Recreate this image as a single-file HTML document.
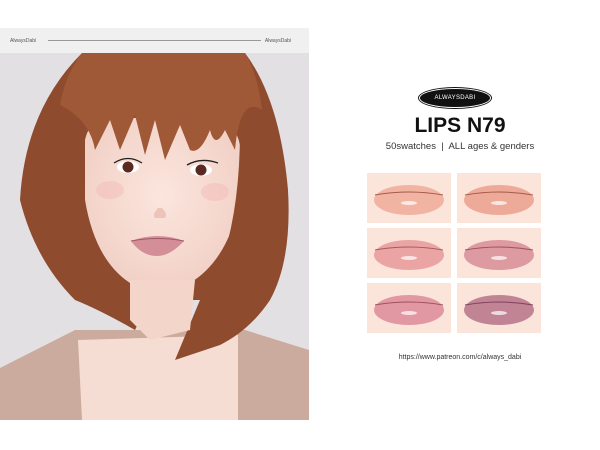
<!DOCTYPE html>
<html><head><style>
body{margin:0;width:600px;height:450px;background:#fff;position:relative;overflow:hidden;font-family:"Liberation Sans",sans-serif}
.hdr{position:absolute;left:0;top:28px;width:309px;height:25px;background:#f0f0f0;font-size:5px;color:#555}
.hdr span{position:absolute;top:10px}
.line{position:absolute;left:48px;right:48px;top:12px;height:1px;background:#999}
.pill{position:absolute;left:419px;top:88px;width:70px;height:18px;border-radius:50%;background:#111;border:1px solid #fff;box-shadow:0 0 0 1px #111;color:#fff;font-size:6px;text-align:center;line-height:18px;letter-spacing:.3px}
.title{position:absolute;left:360px;width:200px;text-align:center;top:114px;font-size:21px;font-weight:bold;color:#111}
.sub{position:absolute;left:340px;width:240px;text-align:center;top:141px;font-size:9.5px;color:#333}
.sw{position:absolute;width:84px;height:50px;background:#fbe4da;overflow:hidden}
.url{position:absolute;left:340px;width:240px;text-align:center;top:354px;font-size:7px;color:#333}
</style></head><body>
<div class="hdr"><span style="left:10px">AlwaysDabi</span><div class="line"></div><span style="right:18px">AlwaysDabi</span></div>
<svg style="position:absolute;left:0;top:53px" width="309" height="367" viewBox="0 53 309 367">
<defs><radialGradient id="sk" cx=".5" cy=".45" r=".6"><stop offset="0" stop-color="#fbe6de"/><stop offset="1" stop-color="#f1cfc4"/></radialGradient></defs>
<rect x="0" y="53" width="309" height="367" fill="#e3e0e3"/>
<path d="M0 368 L75 330 L245 330 L309 350 L309 420 L0 420Z" fill="#cbab9d"/>
<path d="M78 340 L82 420 L238 420 L238 335 Z" fill="#f6ddd3"/>
<path d="M82 53 L245 53 Q280 100 288 190 Q292 260 270 300 Q250 330 220 345 L175 360 L200 300 L150 300 L135 330 Q100 310 75 300 Q35 260 20 200 Q25 110 82 53Z" fill="#8e4b2e"/>
<path d="M85 140 Q90 115 120 118 L210 118 Q235 120 240 145 L240 200 Q228 260 190 283 Q160 295 130 283 Q95 260 85 200Z" fill="url(#sk)"/>
<path d="M130 280 L195 280 L190 330 L150 340 L130 320Z" fill="#f3d5ca"/>
<path d="M82 53 L245 53 Q258 75 262 110 Q240 95 235 150 L225 130 Q215 150 210 130 Q200 155 190 150 L180 125 L165 160 L155 120 L145 155 L135 115 L120 150 L110 120 L95 150 Q90 120 60 105 Q65 75 82 53Z" fill="#a05937"/>
<path d="M60 105 Q85 140 85 200 Q90 250 120 290 L95 300 Q55 250 50 180Z" fill="#8e4b2e"/>
<path d="M240 130 Q240 230 210 290 L245 300 Q270 240 262 150Z" fill="#8e4b2e"/>
<ellipse cx="128" cy="167" rx="11" ry="6" fill="#fff"/><circle cx="128" cy="167" r="5.5" fill="#5a2a22"/>
<path d="M114 163 Q128 154 142 163" stroke="#222" stroke-width="1.3" fill="none"/>
<ellipse cx="201" cy="170" rx="11" ry="6" fill="#fff"/><circle cx="201" cy="170" r="5.5" fill="#5a2a22"/>
<path d="M187 165 Q201 157 218 163" stroke="#222" stroke-width="1.3" fill="none"/>
<ellipse cx="110" cy="190" rx="14" ry="9" fill="#f4bfbd" opacity=".6"/>
<ellipse cx="215" cy="192" rx="14" ry="9" fill="#f4bfbd" opacity=".6"/>
<path d="M158 208 Q152 215 155 218 L165 218 Q168 214 162 208" fill="#ecc4b8"/>
<path d="M131 241 Q158 231 184 241 Q170 256 157 256 Q142 256 131 241Z" fill="#d48e98"/>
<path d="M131 241 Q158 236 184 241" stroke="#a05a66" fill="none"/>
</svg>
<div class="pill">ALWAYSDABI</div>
<div class="title">LIPS N79</div>
<div class="sub">50swatches &nbsp;|&nbsp; ALL ages &amp; genders</div>
<div class="sw" style="left:367px;top:173px"><svg width="84" height="50"><ellipse cx="42" cy="27" rx="35" ry="15" fill="#f2b4a2"/><path d="M8 22 Q42 16 76 22" stroke="#a65a4a" fill="none"/><ellipse cx="42" cy="30" rx="8" ry="2" fill="#fff" opacity=".7"/></svg></div>
<div class="sw" style="left:457px;top:173px"><svg width="84" height="50"><ellipse cx="42" cy="27" rx="35" ry="15" fill="#eeaa98"/><path d="M8 22 Q42 16 76 22" stroke="#a65a4a" fill="none"/><ellipse cx="42" cy="30" rx="8" ry="2" fill="#fff" opacity=".7"/></svg></div>
<div class="sw" style="left:367px;top:228px"><svg width="84" height="50"><ellipse cx="42" cy="27" rx="35" ry="15" fill="#eba4a4"/><path d="M8 22 Q42 16 76 22" stroke="#a65a5a" fill="none"/><ellipse cx="42" cy="30" rx="8" ry="2" fill="#fff" opacity=".7"/></svg></div>
<div class="sw" style="left:457px;top:228px"><svg width="84" height="50"><ellipse cx="42" cy="27" rx="35" ry="15" fill="#dd9aa0"/><path d="M8 22 Q42 16 76 22" stroke="#a05060" fill="none"/><ellipse cx="42" cy="30" rx="8" ry="2" fill="#fff" opacity=".7"/></svg></div>
<div class="sw" style="left:367px;top:283px"><svg width="84" height="50"><ellipse cx="42" cy="27" rx="35" ry="15" fill="#e298a2"/><path d="M8 22 Q42 16 76 22" stroke="#a05060" fill="none"/><ellipse cx="42" cy="30" rx="8" ry="2" fill="#fff" opacity=".7"/></svg></div>
<div class="sw" style="left:457px;top:283px"><svg width="84" height="50"><ellipse cx="42" cy="27" rx="35" ry="15" fill="#c08494"/><path d="M8 22 Q42 16 76 22" stroke="#804060" fill="none"/><ellipse cx="42" cy="30" rx="8" ry="2" fill="#fff" opacity=".7"/></svg></div>
<div class="url">https://www.patreon.com/c/always_dabi</div>
</body></html>
